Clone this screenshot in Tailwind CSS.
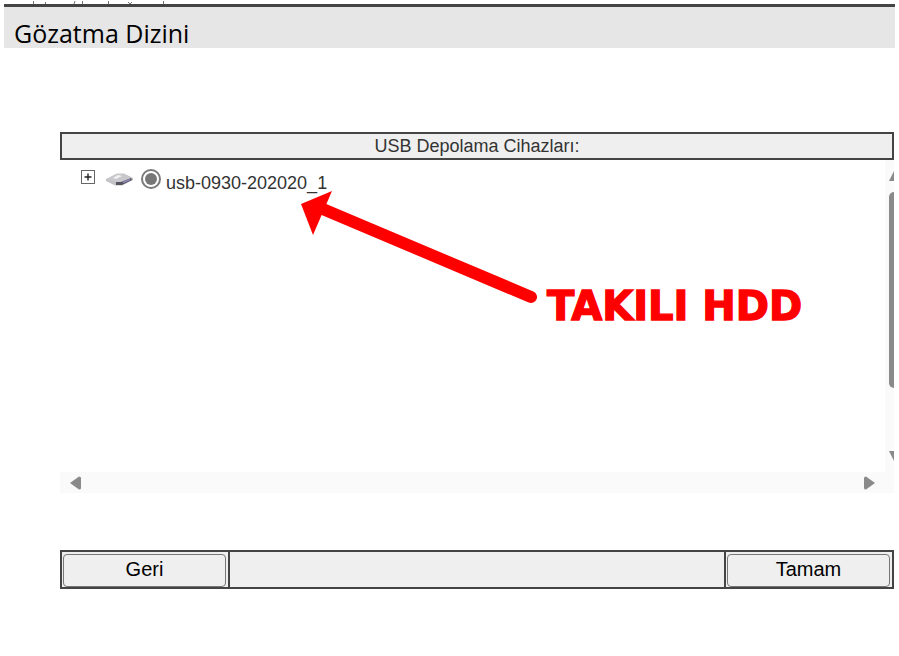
<!DOCTYPE html>
<html lang="tr">
<head>
<meta charset="utf-8">
<script src="https://cdn.jsdelivr.net/npm/@tailwindcss/browser@4"></script>
<title>Gözatma Dizini</title>
</head>
<body class="relative w-[899px] h-[656px] overflow-hidden bg-white font-['Liberation_Sans',Arial,sans-serif] text-[#333]">
  <div class="w-[891px] ml-1">
    <svg class="block" width="891" height="4" viewBox="0 0 891 4"><path d="M29.5 1v3M41.5 2v2M71 1l-1 3M78.5 1v3M104.5 1v3M124 2l2 2 2-2M159.5 1v3" stroke="#777" fill="none"/></svg>
    <div class="h-[3px] bg-[#444]"></div>
    <div class="h-[41px] bg-[#e6e6e6] pl-2.5 pt-[9px] font-['Open_Sans',sans-serif] text-[25px] leading-[34px] text-black">Gözatma Dizini</div>

    <div class="ml-14 mt-[84px] w-[834px]">
      <div class="h-7 border-2 border-[#444] bg-[#efefef] text-center text-lg leading-[25px] text-[#333]">USB Depolama Cihazları:</div>

      <div class="flex h-[312px]">
        <div class="flex-1 flex items-start pl-[21px] pt-[10px]">
          <svg class="shrink-0" width="14" height="14" viewBox="0 0 14 14"><rect x="0.5" y="0.5" width="13" height="13" fill="#fff" stroke="#666"/><path d="M3.5 7h7M7 3.5v7" stroke="#222" stroke-width="1.4"/></svg>
          <svg class="ml-[11px] mt-0.5 shrink-0" width="27" height="14" viewBox="0 0 27 14">
            <path d="M0 7 11 1.5 18 1.5 27 6 27 8 16 13.5 9 13.5 0 9Z" fill="#a9a9ad" opacity="0.7"/>
            <path d="M2 7 10 2 17 2 25 6 15 10 10 10Z" fill="#c9c9cd"/>
            <path d="M7 6 12 3 16 4 10 7Z" fill="#f2f2f4"/>
            <path d="M10 13 16 13 26 8 25 6 15 10 10 10Z" fill="#55555f"/>
            <path d="M17 10.5 24 7.5" stroke="#8d86b8" stroke-width="1.4"/>
          </svg>
          <div class="ml-2 -mt-px w-5 h-5 shrink-0 rounded-full border-2 border-[#7a7a7a] bg-white flex items-center justify-center"><div class="w-3 h-3 rounded-full bg-[#777]"></div></div>
          <span class="ml-[5px] mt-[3px] text-lg leading-[21px] whitespace-nowrap text-[#333]">usb-0930-202020_1</span>
        </div>
        <div class="w-[9px] shrink-0 bg-[#fafafa] flex flex-col items-end">
          <svg class="mt-[11px] shrink-0" width="5" height="10" viewBox="0 0 5 10"><path d="M5 0V10H0Z" fill="#8a8a8a"/></svg>
          <div class="mt-[11px] w-[5px] h-[196px] rounded-l-[5px] bg-[#8a8a8a]"></div>
          <svg class="mt-[63px] shrink-0" width="5" height="10" viewBox="0 0 5 10"><path d="M0 0H5V10Z" fill="#8a8a8a"/></svg>
        </div>
      </div>

      <div class="h-[21px] bg-[#fafafa] flex items-center justify-between pl-[10px] pr-[19px]">
        <svg width="11" height="14" viewBox="0 0 11 14"><path d="M0 7 9 0.5Q11 0.5 11 2V12Q11 13.5 9 13.5Z" fill="#8a8a8a"/></svg>
        <svg width="11" height="14" viewBox="0 0 11 14"><path d="M11 7 2 0.5Q0 0.5 0 2V12Q0 13.5 2 13.5Z" fill="#8a8a8a"/></svg>
      </div>

      <div class="mt-[57px] h-[39px] border-2 border-[#444] bg-[#efefef] flex">
        <div class="w-[168px] shrink-0 border-r-2 border-[#444] pl-px pt-0.5">
          <button class="block w-[163px] h-[33px] rounded-[4px] border border-[#777] bg-[#efefef] text-center text-xl leading-[25px] pb-0.5 text-black">Geri</button>
        </div>
        <div class="flex-1"></div>
        <div class="w-[168px] shrink-0 border-l-2 border-[#444] pl-px pt-0.5">
          <button class="block w-[163px] h-[33px] rounded-[4px] border border-[#777] bg-[#efefef] text-center text-xl leading-[25px] pb-0.5 text-black">Tamam</button>
        </div>
      </div>
    </div>
  </div>

  <svg class="absolute left-0 top-0" width="899" height="656" viewBox="0 0 899 656">
    <path d="M531 297 318 207" stroke="#fe0000" stroke-width="12" stroke-linecap="round" fill="none"/>
    <path d="M301 204 332 191 313 235Z" fill="#fe0000"/>
  </svg>
  <div class="absolute left-[547px] top-[282px] font-['DejaVu_Sans',sans-serif] text-[40px] leading-[48px] font-bold whitespace-nowrap text-[#fe0000] [-webkit-text-stroke:1.4px_#fe0000]">TAKILI HDD</div>
</body>
</html>
